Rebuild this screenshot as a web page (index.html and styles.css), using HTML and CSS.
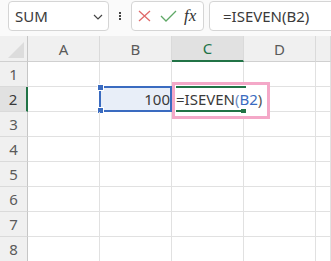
FILE: index.html
```html
<!DOCTYPE html>
<html lang="en">
<head>
<meta charset="UTF-8">
<title>ISEVEN</title>
<link rel="stylesheet" href="styles.css">
</head>
<body>

<!-- Formula toolbar -->
<div class="toolbar">
  <div class="name-box">
    <span>SUM</span>
    <svg class="chev" width="10" height="6" viewBox="0 0 10 6"><path d="M1 1 L5 5 L9 1" fill="none" stroke="#444" stroke-width="1.2"/></svg>
  </div>
  <div class="dots"><i></i><i></i><i></i></div>
  <div class="fx-box">
    <svg width="13" height="12" viewBox="0 0 13 12"><path d="M1 1 L12 11 M12 1 L1 11" stroke="#e06a6a" stroke-width="1.3" fill="none"/></svg>
    <svg width="17" height="12" viewBox="0 0 17 12"><path d="M1 6 L6 11 L16 1" stroke="#5fa866" stroke-width="1.3" fill="none"/></svg>
    <span class="fx">fx</span>
  </div>
  <div class="formula-bar">=ISEVEN(B2)</div>
</div>

<!-- Sheet -->
<div class="sheet">
  <div class="hd corner"><b></b></div>
  <div class="hd col">A</div>
  <div class="hd col">B</div>
  <div class="hd col active-col">C</div>
  <div class="hd col">D</div>
  <div class="hd col"></div>

  <div class="hd row">1</div>
  <div class="cell"></div><div class="cell"></div><div class="cell"></div><div class="cell"></div><div class="cell"></div>

  <div class="hd row active-row">2</div>
  <div class="cell"></div>
  <div class="cell num selected">100<span class="sel"><i class="h tl"></i><i class="h bl"></i></span></div>
  <div class="cell editing">
    <div class="edit">
      <span class="g top"></span>
      <span class="g bottom"></span><span class="g knob"></span>
      <span class="etext">=ISEVEN<span class="paren">(</span><span class="ref">B2</span><span class="close">)</span></span>
    </div>
  </div>
  <div class="cell"></div><div class="cell"></div>

  <div class="hd row">3</div>
  <div class="cell"></div><div class="cell"></div><div class="cell"></div><div class="cell"></div><div class="cell"></div>
  <div class="hd row">4</div>
  <div class="cell"></div><div class="cell"></div><div class="cell"></div><div class="cell"></div><div class="cell"></div>
  <div class="hd row">5</div>
  <div class="cell"></div><div class="cell"></div><div class="cell"></div><div class="cell"></div><div class="cell"></div>
  <div class="hd row">6</div>
  <div class="cell"></div><div class="cell"></div><div class="cell"></div><div class="cell"></div><div class="cell"></div>
  <div class="hd row">7</div>
  <div class="cell"></div><div class="cell"></div><div class="cell"></div><div class="cell"></div><div class="cell"></div>
  <div class="hd row">8</div>
  <div class="cell"></div><div class="cell"></div><div class="cell"></div><div class="cell"></div><div class="cell"></div>
</div>

</body>
</html>
```

FILE: styles.css
```css
body {
  margin: 0;
  overflow: hidden;
  background: #fff;
  font-family: "Noto Sans", "Open Sans", sans-serif;
  color: #3a3a3a;
}

.toolbar {
  display: flex;
  align-items: center;
  height: 36px;
  padding: 0 0 4px 8px;
  box-sizing: border-box;
  background: #fafafa;
}

.name-box {
  width: 101px;
  height: 30px;
  box-sizing: border-box;
  border: 1px solid #d5d5d5;
  border-radius: 4px;
  background: #fff;
  display: flex;
  align-items: center;
  justify-content: space-between;
  padding: 0 5px 0 6px;
  font-size: 15px;
}

.chev { margin-top: 2px; }

.dots {
  width: 22px;
  display: flex;
  flex-direction: column;
  align-items: center;
  gap: 1px;
}
.dots i {
  width: 2px;
  height: 2px;
  background: #444;
}

.fx-box {
  width: 73px;
  height: 30px;
  box-sizing: border-box;
  border: 1px solid #d5d5d5;
  border-radius: 4px;
  background: #fff;
  display: flex;
  align-items: center;
  padding-left: 6px;
  gap: 9px;
}

.fx {
  font-family: "Liberation Serif", serif;
  font-style: italic;
  font-size: 17px;
  color: #333;
  margin-left: -2px;
}

.formula-bar {
  flex: 1;
  height: 30px;
  margin-left: 5px;
  margin-right: -6px;
  box-sizing: border-box;
  border: 1px solid #d5d5d5;
  border-radius: 4px;
  background: #fff;
  display: flex;
  align-items: center;
  padding-left: 13px;
  font-size: 15px;
}

.sheet {
  display: grid;
  grid-template-columns: 28px 72px 72px 72px 72px 1fr;
  grid-template-rows: 26px repeat(8, 25px);
  font-size: 15px;
}

.hd {
  background: #f0f0f0;
  color: #5a5a5a;
  display: flex;
  align-items: center;
  justify-content: center;
  box-sizing: border-box;
}

.col {
  border-right: 1px solid #dadada;
  border-bottom: 1px solid #d0d0d0;
}

.row {
  border-right: 1px solid #c6c6c6;
  border-bottom: 1px solid #dadada;
}

.corner {
  border-right: 1px solid #c6c6c6;
  border-bottom: 1px solid #d0d0d0;
  align-items: flex-end;
  justify-content: flex-end;
  padding: 0 3px 3px 0;
}
.corner b {
  width: 0;
  height: 0;
  border-left: 16px solid transparent;
  border-bottom: 16px solid #dcdcdc;
}

.active-col {
  background: #e1e1e1;
  color: #217346;
  border-bottom: 2px solid #217346;
}

.active-row {
  background: #e1e1e1;
  color: #3a3a3a;
  border-right: 2px solid #217346;
}

.cell {
  box-sizing: border-box;
  border-right: 1px solid #e1e1e1;
  border-bottom: 1px solid #e1e1e1;
  position: relative;
}

.num {
  display: flex;
  align-items: center;
  justify-content: flex-end;
  padding-right: 1px;
}

.selected { background: #e8eef8; }

.sel {
  position: absolute;
  left: -1px;
  top: -1px;
  right: -1px;
  bottom: -1px;
  border: 2px solid #3a6bc0;
}

.h {
  position: absolute;
  width: 5px;
  height: 5px;
  background: #3a6bc0;
  border: 1px solid #fff;
}
.tl { left: -4px; top: -4px; }
.bl { left: -4px; bottom: -4px; }

.edit {
  position: absolute;
  left: 0;
  top: -5px;
  width: 98px;
  height: 37px;
  box-sizing: border-box;
  border: 3px solid #f4a8c8;
  background: #fff;
  z-index: 2;
}

.g {
  position: absolute;
  background: #217346;
}
.g.top { left: 1px; top: 1px; width: 70px; height: 2px; }
.g.bottom { left: 1px; top: 25px; width: 66px; height: 2px; }
.g.knob { left: 66px; top: 24px; width: 5px; height: 4px; }

.etext {
  position: absolute;
  left: 1px;
  top: 4px;
  font-size: 15px;
  white-space: nowrap;
}
.paren { color: #6b8cc4; }
.ref { color: #3a6bc0; }
.close { color: #555; }
```
